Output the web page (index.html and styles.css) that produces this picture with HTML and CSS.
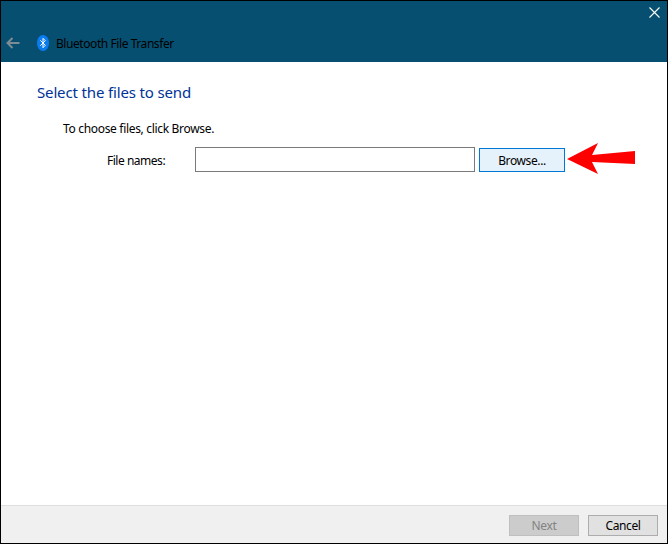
FILE: index.html
```html
<!DOCTYPE html>
<html lang="en">
<head>
<meta charset="utf-8">
<title>Bluetooth File Transfer</title>
<link rel="stylesheet" href="styles.css">
</head>
<body>
<div class="window">
  <header class="header">
    <div class="close-row">
      <svg class="close-icon" width="11" height="11" viewBox="0 0 11 11"><path d="M.5.5l10 10M10.500.5l-10 10" stroke="#fff" stroke-width="1.1" fill="none"/></svg>
    </div>
    <div class="nav-row">
      <svg class="back-icon" width="14" height="12" viewBox="0 0 14 12"><path d="M13.500 6H1.500M6.500 1L1.500 6l5 5" stroke="#7d8b95" stroke-width="2" fill="none"/></svg>
      <svg class="bt-icon" width="12" height="16" viewBox="0 0 12 16"><ellipse cx="6" cy="8" rx="6" ry="8" fill="#0a7cf0"/><path d="M3.300 5.300L8.300 10.300 6 12.700V3.300L8.300 5.700 3.300 10.700" stroke="#fff" stroke-width="1" fill="none"/></svg>
      <span class="title">Bluetooth File Transfer</span>
    </div>
  </header>
  <main class="content">
    <h1 class="heading">Select the files to send</h1>
    <p class="hint">To choose files, click Browse.</p>
    <div class="file-row">
      <label class="file-label" for="files">File names:</label>
      <input class="file-input" id="files" type="text">
      <button class="btn btn-browse" type="button">Browse...</button>
      <svg class="arrow" width="69" height="32" viewBox="0 0 69 32"><path d="M0 16L31 0 25 12 68 8V21L25 19 31 31Z" fill="#fe0000"/></svg>
    </div>
  </main>
  <footer class="footer">
    <button class="btn btn-disabled" type="button" disabled>Next</button>
    <button class="btn btn-cancel" type="button">Cancel</button>
  </footer>
</div>
</body>
</html>
```
FILE: styles.css
```css
html, body {
  margin: 0;
  padding: 0;
  height: 100%;
  background: #fff;
}
.window {
  box-sizing: border-box;
  width: 668px;
  height: 544px;
  display: flex;
  flex-direction: column;
  border: 1px solid #000;
  font-family: "Noto Sans", "Open Sans", sans-serif;
  font-size: 12px;
  color: #000;
}
.header {
  height: 61px;
  background: #064f70;
  display: flex;
  flex-direction: column;
}
.close-row {
  display: flex;
  justify-content: flex-end;
  padding: 6px 7px 0 0;
  height: 16px;
}
.close-icon { display: block; }
.nav-row {
  display: flex;
  align-items: center;
  margin-top: 11px;
  height: 18px;
  padding-left: 5px;
}
.back-icon { display: block; }
.bt-icon { display: block; margin-left: 17px; }
.title {
  margin-left: 7px;
  font-size: 12px;
  letter-spacing: -0.43px;
  white-space: nowrap;
}
.content {
  flex: 1;
  padding: 21px 0 0 36px;
}
.heading {
  margin: 0;
  font-size: 15px;
  line-height: 18px;
  font-weight: 400;
  color: #003399;
  letter-spacing: -0.15px;
}
.hint {
  margin: 20px 0 0 26px;
  line-height: 16px;
  letter-spacing: -0.32px;
}
.file-row {
  display: flex;
  align-items: center;
  margin-top: 6px;
  height: 34px;
}
.file-label {
  margin-left: 70px;
  width: 88px;
  letter-spacing: -0.48px;
}
.file-input {
  box-sizing: border-box;
  width: 280px;
  height: 25px;
  margin: 0 0 1px;
  padding: 0;
  border: 1px solid #7a7a7a;
  background: #fff;
  border-radius: 0;
  outline: none;
}
.btn {
  box-sizing: border-box;
  height: 24px;
  margin: 0;
  padding: 0;
  border: 1px solid #adadad;
  background: #e1e1e1;
  border-radius: 0;
  font: inherit;
  color: #000;
  letter-spacing: -0.38px;
}
.btn-browse {
  width: 86px;
  margin-left: 4px;
  border: 1px solid #0078d7;
  background: #e5f1fb;
}
.arrow {
  display: block;
  margin: 0 0 2px 2px;
}
.footer {
  box-sizing: border-box;
  height: 38px;
  background: #f0f0f0;
  border-top: 1px solid #dfdfdf;
  display: flex;
  justify-content: flex-end;
  align-items: center;
  gap: 9px;
  padding: 2px 9px 0 0;
}
.btn-disabled {
  width: 70px;
  height: 21px;
  background: #cccccc;
  border-color: #bfbfbf;
  color: #838383;
}
.btn-cancel {
  width: 70px;
  height: 21px;
}
```
